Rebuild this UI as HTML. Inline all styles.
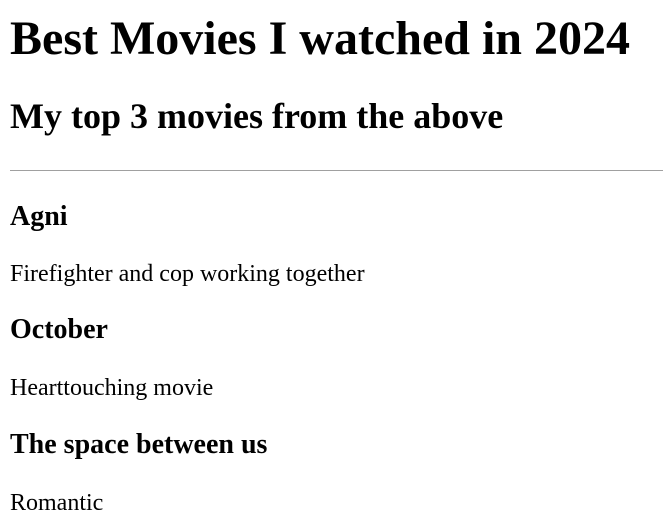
<!DOCTYPE html>
<html><head><meta charset="utf-8"><style>
html,body{margin:0;padding:0;background:#fff;width:663px;height:522px;overflow:hidden}
body{font-family:"Liberation Serif",serif;color:#000;position:relative}
.t{position:absolute;left:10px;white-space:nowrap;line-height:1}
.b{font-weight:bold}
hr{position:absolute;left:10px;top:170px;width:653px;margin:0;border:0;border-top:1px solid #a0a0a0;height:0}
</style></head><body>
<div class="t b" style="font-size:48px;top:15px">Best Movies I watched in 2024</div>
<div class="t b" style="font-size:36px;top:98px">My top 3 movies from the above</div>
<hr>
<div class="t b" style="font-size:28px;top:203px">Agni</div>
<div class="t" style="font-size:24px;top:262px">Firefighter and cop working together</div>
<div class="t b" style="font-size:28px;top:316px">October</div>
<div class="t" style="font-size:24px;top:376px">Hearttouching movie</div>
<div class="t b" style="font-size:28px;top:431px">The space between us</div>
<div class="t" style="font-size:24px;top:491px">Romantic</div>
</body></html>
